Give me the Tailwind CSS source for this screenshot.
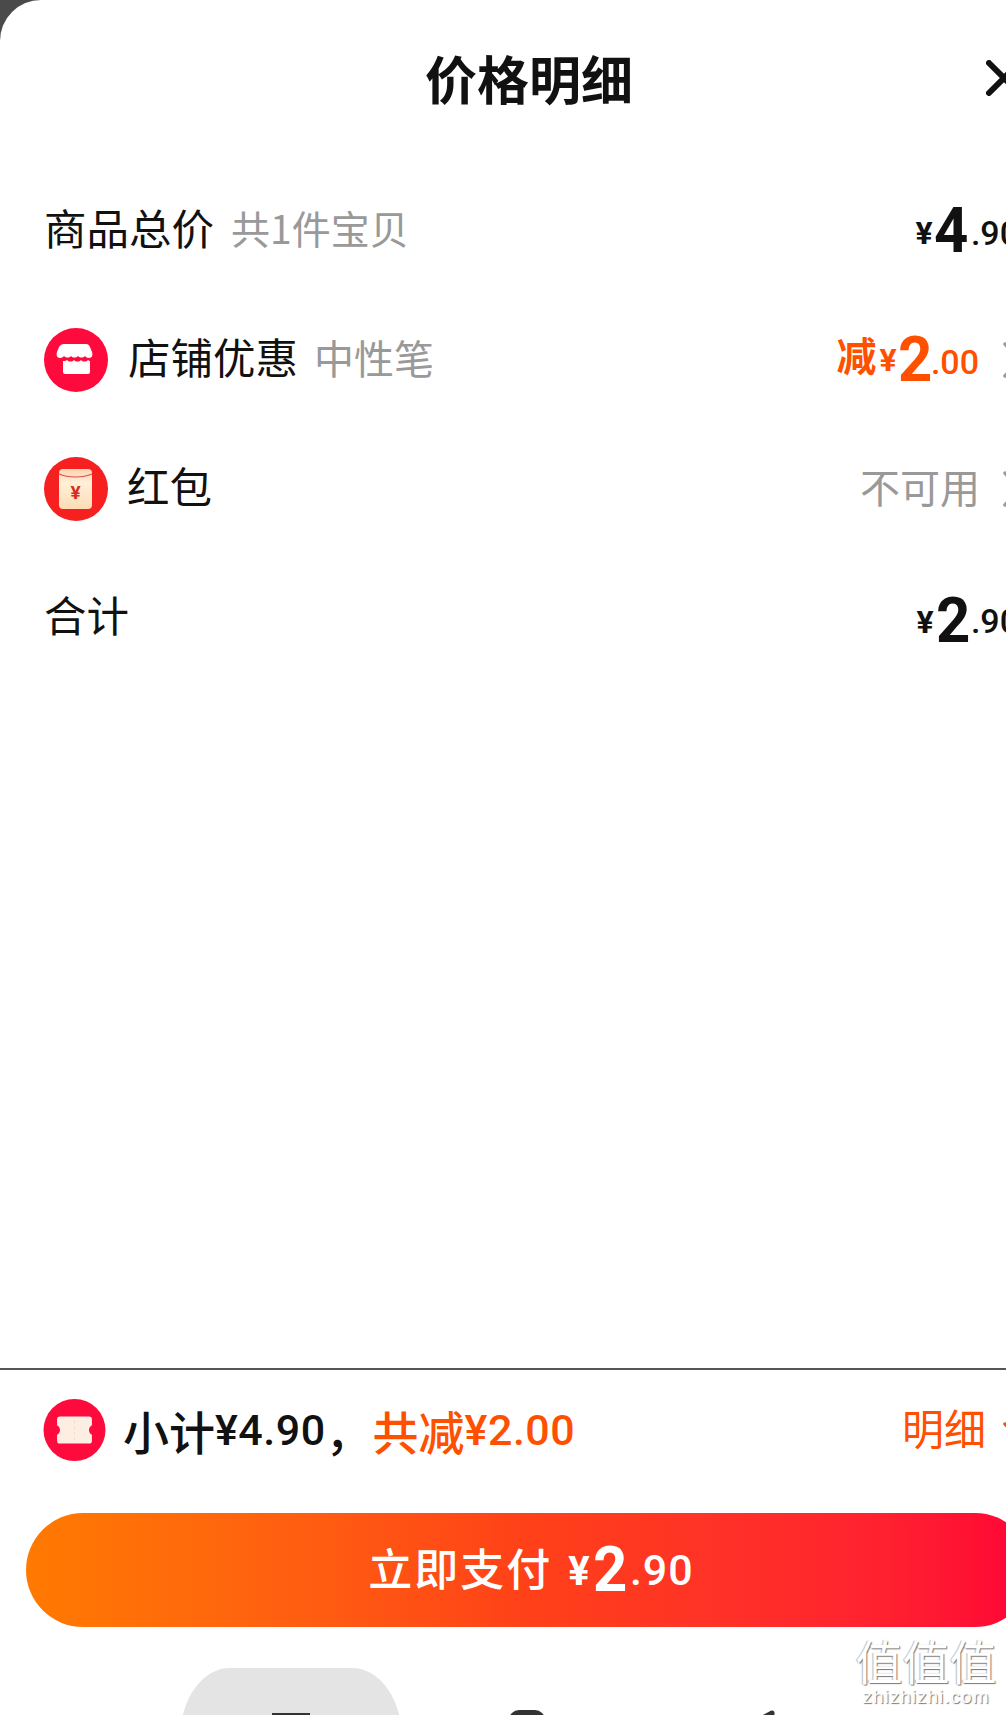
<!DOCTYPE html>
<html lang="zh-CN">
<head>
    <meta charset="UTF-8">
    <title>价格明细</title>
    <script src="https://cdn.jsdelivr.net/npm/@tailwindcss/browser@4"></script>
</head>
<body class="bg-[#4a4a4a]">
    <div class="w-[1006px] h-[1715px] overflow-hidden relative font-['Noto_Sans_CJK_SC','Noto_Sans',sans-serif] text-[#111]">
        <div class="w-[1058px] h-full bg-white rounded-tl-[41px] flex flex-col">

            <header class="h-[166px] pb-[10px] flex items-center justify-center relative">
                <h1 class="text-[52px] font-bold leading-none">价格明细</h1>
                <svg class="absolute left-[986px] top-[60px] w-[36px] h-[36px]" viewBox="0 0 36 36" fill="none" stroke="#111" stroke-width="6" stroke-linecap="round">
                    <path d="M3 3l30 30M33 3L3 33"/>
                </svg>
            </header>

            <!-- rows -->
            <div class="h-[129px] px-[45px] flex items-center justify-between">
                <div class="flex items-center ml-[-1px]">
                    <span class="text-[42.5px] leading-none pb-[6px]">商品总价</span>
                    <span class="text-[39px] leading-none pb-[6px] text-[#999] ml-[17px]">共1件宝贝</span>
                </div>
                <div class="flex items-baseline mr-[-6px] translate-y-[2px] font-['Roboto',sans-serif] font-medium">
                    <span class="text-[32px] font-bold -translate-y-[8px]">¥</span>
                    <span class="text-[63px] leading-none font-bold mr-[2px] scale-x-95">4</span>
                    <span class="text-[34px] -translate-y-[7px]">.90</span>
                </div>
            </div>

            <div class="h-[129px] px-[45px] flex items-center justify-between">
                <div class="flex items-center ml-[-1px]">
                    <svg class="w-[64px] h-[64px] mr-[20px]" viewBox="0 0 64 64">
                        <circle cx="32" cy="32" r="32" fill="#ff0a3c"/>
                        <path d="M22 16h20c2 0 3 1 4 3l2 5c1 3 0 6-3 6-2 0-3-1-4-2-2 2-5 2-7 0-2 2-5 2-7 0-2 2-5 2-7 0-1 1-2 2-4 2-3 0-4-3-3-6l2-5c1-2 3-3 5-3z" fill="#fff"/>
                        <path d="M19 33c1 0 3 0 4-1 2 2 5 2 7 0 2 2 5 2 7 0 2 2 5 2 7 0 1 1 2 1 2 1v11a2 2 0 0 1-2 2H21a2 2 0 0 1-2-2z" fill="#fff"/>
                    </svg>
                    <span class="text-[42.5px] leading-none pb-[6px]">店铺优惠</span>
                    <span class="text-[40px] leading-none pb-[6px] text-[#999] ml-[16px]">中性笔</span>
                </div>
                <div class="flex items-center mr-[-8px]">
                    <div class="flex items-baseline translate-y-[2px] text-[#ff5000] font-['Roboto',sans-serif] font-medium">
                        <span class="text-[40px] font-bold font-['Noto_Sans_CJK_SC',sans-serif] leading-none -translate-y-[10px]">减</span>
                        <span class="text-[32px] font-bold ml-[3px] -translate-y-[10px]">¥</span>
                        <span class="text-[63px] leading-none font-bold mr-[-2px] scale-x-95">2</span>
                        <span class="text-[34px] -translate-y-[7px]">.00</span>
                    </div>
                    <svg class="w-[18px] h-[36px] ml-[24px]" viewBox="0 0 18 36" fill="none" stroke="#999" stroke-width="3.5" stroke-linecap="round">
                        <path d="M2 2l14 16L2 34"/>
                    </svg>
                </div>
            </div>

            <div class="h-[129px] px-[45px] flex items-center justify-between">
                <div class="flex items-center ml-[-1px]">
                    <svg class="w-[64px] h-[64px] mr-[19px]" viewBox="0 0 64 64">
                        <defs>
                            <linearGradient id="packet" x1="0" y1="0" x2="0" y2="1">
                                <stop offset="0" stop-color="#fbd3b0"/>
                                <stop offset="0.35" stop-color="#fff0d8"/>
                                <stop offset="1" stop-color="#fcdcb4"/>
                            </linearGradient>
                        </defs>
                        <circle cx="32" cy="32" r="32" fill="#f5201f"/>
                        <rect x="15" y="12" width="33" height="40" rx="4" fill="url(#packet)"/>
                        <path d="M15 17c9 4 24 4 33 0" fill="none" stroke="#d8504a" stroke-width="1.2"/>
                        <text x="31.5" y="42" text-anchor="middle" font-size="19" font-weight="700" fill="#d92b22" font-family="Roboto">¥</text>
                    </svg>
                    <span class="text-[42.5px] leading-none pb-[6px]">红包</span>
                </div>
                <div class="flex items-center mr-[-8px]">
                    <span class="text-[40px] leading-none pb-[6px] text-[#999]">不可用</span>
                    <svg class="w-[18px] h-[36px] ml-[23px]" viewBox="0 0 18 36" fill="none" stroke="#999" stroke-width="3.5" stroke-linecap="round">
                        <path d="M2 2l14 16L2 34"/>
                    </svg>
                </div>
            </div>

            <div class="h-[129px] px-[45px] flex items-center justify-between">
                <span class="text-[42.5px] leading-none pb-[6px] ml-[-1px]">合计</span>
                <div class="flex items-baseline mr-[-6px] translate-y-[5px] font-['Roboto',sans-serif] font-medium">
                    <span class="text-[32px] font-bold -translate-y-[9px] mr-[-2px]">¥</span>
                    <span class="text-[63px] leading-none font-bold ml-[3px] scale-x-95">2</span>
                    <span class="text-[34px] -translate-y-[9px]">.90</span>
                </div>
            </div>

            <div class="flex-1"></div>

            <!-- bottom bar -->
            <div class="border-t-2 border-[#555] pt-[29px] pl-[43px] pr-[27px] h-[145px] flex items-start justify-between">
                <div class="flex items-center">
                    <svg class="w-[63px] h-[62px] mr-[17px]" viewBox="0 0 64 64">
                        <circle cx="32" cy="32" r="32" fill="#ff0a3c"/>
                        <path d="M17 18h30a3 3 0 0 1 3 3v6c-2 1-3 3-3 5s1 4 3 5v6a3 3 0 0 1-3 3H17a3 3 0 0 1-3-3v-6c2-1 3-3 3-5s-1-4-3-5v-6a3 3 0 0 1 3-3z" fill="#fdeee4"/>
                        <path d="M32 22v20" stroke="#f6d8c8" stroke-width="1" stroke-dasharray="3 3"/>
                    </svg>
                    <span class="text-[46px] leading-none font-medium">小计</span>
                    <span class="text-[43px] leading-none font-medium font-['Roboto',sans-serif] tracking-[0.5px]">¥4.90</span>
                    <span class="text-[46px] leading-none font-medium w-[47px]">，</span>
                    <span class="text-[46px] leading-none font-medium text-[#ff5000]">共减</span>
                    <span class="text-[43px] leading-none font-medium text-[#ff5000] font-['Roboto',sans-serif] tracking-[0.5px]">¥2.00</span>
                </div>
                <div class="flex items-center h-[62px]">
                    <span class="text-[42px] leading-none pb-[6px] text-[#ff5000]">明细</span>
                    <svg class="w-[28px] h-[16px] ml-[17px]" viewBox="0 0 28 16" fill="none" stroke="#ff5000" stroke-width="3.5" stroke-linecap="round">
                        <path d="M2 2l12 12L26 2"/>
                    </svg>
                </div>
            </div>

            <button class="mx-[26px] w-[1006px] h-[114px] pl-[4px] rounded-full bg-gradient-to-r from-[#ff7a00] via-[#ff4018] to-[#ff0036] text-white flex items-baseline justify-center leading-[114px]">
                <span class="text-[44px] font-medium tracking-[2px] -translate-y-[5px]">立即支付</span>
                <span class="ml-[16px] text-[40px] font-bold font-['Roboto',sans-serif] -translate-y-[6px]">¥</span>
                <span class="text-[63px] font-bold font-['Roboto',sans-serif] ml-[2px] scale-x-95">2</span>
                <span class="text-[43px] font-medium font-['Roboto',sans-serif] tracking-[1px] ml-[2px] -translate-y-[6px]">.90</span>
            </button>

            <!-- system nav bar, mostly cut off by the screenshot -->
            <nav class="mt-[41px] h-[47px] flex items-start">
                <div class="ml-[180px] w-[222px] h-[90px] bg-[#e4e4e4] rounded-tl-[50px_70px] rounded-tr-[50px_70px] flex justify-center pt-[45px]">
                    <div class="w-[38px] h-[38px] bg-[#333]"></div>
                </div>
                <div class="ml-[107px] mt-[42px] w-[36px] h-[36px] bg-[#333] rounded-[10px]"></div>
                <svg class="ml-[191px] mt-[42px] w-[40px] h-[40px]" viewBox="0 0 40 40" fill="none" stroke="#333" stroke-width="5" stroke-linejoin="round">
                    <path d="M36 3L4 20l32 17z"/>
                </svg>
            </nav>
        </div>

        <!-- watermark -->
        <div class="absolute left-[852px] top-[1635px] w-[148px] text-center text-white">
            <div class="text-[47px] leading-[50px] [text-shadow:1px_1px_1px_#777,-1px_0_1px_#bbb]">值值值</div>
            <div class="text-[19px] leading-[22px] mt-[1px] font-['Liberation_Sans',sans-serif] tracking-[1px] [text-shadow:1px_1px_1px_#777]">zhizhizhi.com</div>
        </div>
    </div>
</body>
</html>
